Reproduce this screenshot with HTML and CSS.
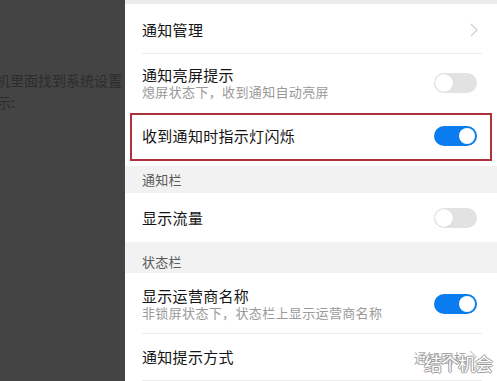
FILE: index.html
```html
<!DOCTYPE html>
<html lang="zh">
<head>
<meta charset="utf-8">
<link rel="stylesheet" href="styles.css">
</head>
<body>
<div class="page">
  <div class="article">
    <p class="line l1">机里面找到系统设置</p>
    <p class="line l2">示:</p>
  </div>
  <div class="panel">
    <div class="topband"></div>

    <div class="row r1">
      <div class="inner divided">
        <span class="title">通知管理</span>
        <svg class="chev" width="8" height="14" viewBox="0 0 8 14"><polyline points="1,1 7,7 1,13" fill="none" stroke="#cfcfcf" stroke-width="1.3"/></svg>
      </div>
    </div>

    <div class="row r2">
      <div class="inner">
        <div class="texts">
          <span class="title">通知亮屏提示</span>
          <span class="sub">熄屏状态下，收到通知自动亮屏</span>
        </div>
        <span class="toggle"></span>
      </div>
    </div>

    <div class="row r3">
      <div class="highlight">
        <span class="title">收到通知时指示灯闪烁</span>
        <span class="toggle on"></span>
      </div>
    </div>

    <div class="band b1">通知栏</div>

    <div class="row r4">
      <div class="inner">
        <span class="title">显示流量</span>
        <span class="toggle"></span>
      </div>
    </div>

    <div class="band b2">状态栏</div>

    <div class="row r5">
      <div class="inner divided">
        <div class="texts">
          <span class="title">显示运营商名称</span>
          <span class="sub">非锁屏状态下，状态栏上显示运营商名称</span>
        </div>
        <span class="toggle on"></span>
      </div>
    </div>

    <div class="row r6">
      <div class="inner divided">
        <span class="title">通知提示方式</span>
        <span class="value">通知图标
          <svg class="chev small" width="8" height="14" viewBox="0 0 8 14"><polyline points="1,1 7,7 1,13" fill="none" stroke="#cfcfcf" stroke-width="1.3"/></svg>
        </span>
      </div>
      <span class="watermark">结个机会</span>
    </div>
  </div>
</div>
</body>
</html>
```

FILE: styles.css
```css
* { box-sizing: border-box; margin: 0; padding: 0; }

html, body {
  width: 497px;
  height: 381px;
  overflow: hidden;
  background: #ffffff;
}

body {
  font-family: "Noto Sans CJK SC", "Noto Sans", sans-serif;
}

.page {
  display: flex;
  width: 497px;
  height: 381px;
}

.article {
  width: 125px;
  flex: none;
  background: #444444;
  overflow: hidden;
  padding-top: 69px;
}

.line {
  white-space: nowrap;
  color: #2c2c2c;
  font-size: 14px;
  line-height: 22px;
}

.l1 { margin-left: -4px; }
.l2 { margin-left: -3px; }

.panel {
  flex: 1;
  display: flex;
  flex-direction: column;
  background: #ffffff;
}

.topband {
  height: 4px;
  background: #ececec;
}

.row {
  position: relative;
  display: flex;
  padding-left: 17px;
  padding-right: 15px;
  background: #ffffff;
}

.inner {
  flex: 1;
  display: flex;
  align-items: center;
  justify-content: space-between;
  padding-right: 5px;
}

.divided {
  border-bottom: 1px solid #ececec;
}

.r1 { height: 50px; }
.r1 .inner { padding-right: 4px; padding-top: 3px; }
.r2 { height: 56px; }
.r2 .inner { padding-top: 2px; }
.r3 { height: 56px; padding: 3px 5px 5px 5px; }
.r4 { height: 49px; }
.r5 { height: 61px; }
.r5 .inner { padding-top: 2px; }
.r6 { height: 47px; }
.r6 .inner { padding-right: 5px; }

.highlight {
  flex: 1;
  display: flex;
  align-items: center;
  justify-content: space-between;
  border: 2px solid #ac313a;
  padding-left: 10px;
  padding-right: 13px;
  padding-bottom: 2px;
}

.texts {
  display: flex;
  flex-direction: column;
}

.title {
  font-size: 15px;
  letter-spacing: 0.3px;
  line-height: 20px;
  color: #141414;
}

.texts .title { line-height: 18px; }

.sub {
  font-size: 13px;
  letter-spacing: 0.35px;
  line-height: 16px;
  color: #9a9a9a;
}

.band {
  background: #f2f2f2;
  color: #5a5a5a;
  font-size: 13px;
  letter-spacing: 0.3px;
  padding-left: 17px;
  display: flex;
  align-items: center;
}

.b1 { height: 27px; }
.b2 { height: 31px; padding-top: 7px; }

.toggle {
  position: relative;
  width: 43px;
  height: 20px;
  border-radius: 10px;
  background: #e2e2e2;
  flex: none;
}

.toggle::after {
  content: "";
  position: absolute;
  left: 1px;
  top: 1px;
  width: 18px;
  height: 18px;
  border-radius: 50%;
  background: #ffffff;
  box-shadow: 0 0 1px rgba(0,0,0,0.15);
}

.toggle.on {
  background: #0b7cef;
}

.toggle.on::after {
  left: auto;
  right: 2px;
  top: 2px;
  width: 16px;
  height: 16px;
  box-shadow: none;
}

.chev { flex: none; }

.value {
  display: flex;
  align-items: center;
  gap: 2px;
  font-size: 13px;
  color: #a8a8a8;
  letter-spacing: 0.3px;
}

.watermark {
  position: absolute;
  right: 5px;
  top: 19px;
  font-size: 18px;
  line-height: 20px;
  color: #ffffff;
  letter-spacing: -1px;
  text-shadow: -1px 0 #9a9a9a, 1px 0 #9a9a9a, 0 -1px #9a9a9a, 0 1px #9a9a9a;
}
```
